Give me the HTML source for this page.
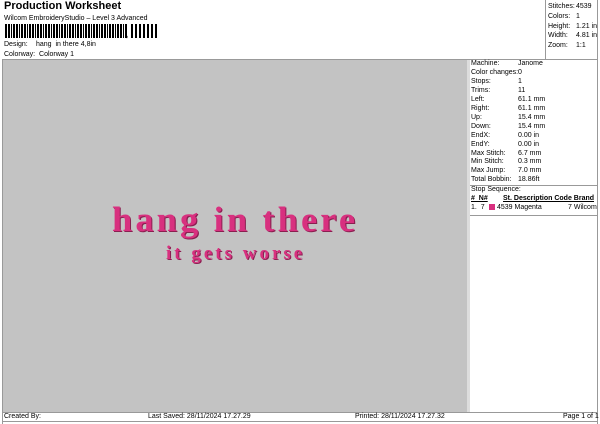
<!DOCTYPE html>
<html><head><meta charset="utf-8"><style>
*{margin:0;padding:0;box-sizing:border-box}
body{width:600px;height:424px;background:#fff;position:relative;overflow:hidden;font-family:"Liberation Sans",sans-serif;font-size:7px;color:#000}
.a{position:absolute;white-space:nowrap}
.bc{position:absolute;left:5px;top:24px;height:14px;width:123px;background:repeating-linear-gradient(90deg,#000 0 2px,#fff 2px 3px,#000 3px 5px,#fff 5px 6px,#000 6px 7px,#fff 7px 8px)}
.t{font-family:"Liberation Serif",serif;font-weight:bold;color:#d8307f;text-shadow:1px 1px 0 #8a1f50;letter-spacing:3px}
</style></head><body>
<div class="a" style="left:4px;top:0px;font-size:11px;font-weight:bold">Production Worksheet</div>
<div class="a" style="left:4px;top:15px">Wilcom EmbroideryStudio – Level 3 Advanced</div>
<div class="bc"></div>
<div class="a" style="left:126px;top:32px;font-weight:bold">,</div>
<div style="position:absolute;left:131px;top:24px;height:14px;width:27px;background:repeating-linear-gradient(90deg,#000 0 2px,#fff 2px 4px)"></div>
<div class="a" style="left:4px;top:41px">Design:</div><div class="a" style="left:36px;top:41px">hang&nbsp; in there 4,8in</div>
<div class="a" style="left:4px;top:51px">Colorway:&nbsp; Colorway 1</div>
<div style="position:absolute;left:545px;top:0;width:1px;height:60px;background:#999"></div>
<div class="a" style="left:548px;top:2px;line-height:9.8px">Stitches:<br>Colors:<br>Height:<br>Width:<br>Zoom:</div>
<div class="a" style="left:576px;top:2px;line-height:9.8px">4539<br>1<br>1.21 in<br>4.81 in<br>1:1</div>
<div style="position:absolute;left:2px;top:59px;width:596px;height:1px;background:#999"></div>
<div style="position:absolute;left:3px;top:60px;width:464px;height:352px;background:#c3c3c3"></div>
<div style="position:absolute;left:467px;top:60px;width:3px;height:352px;background:#ddd"></div>
<div style="position:absolute;left:597px;top:0;width:1px;height:424px;background:#999"></div>
<div style="position:absolute;left:2px;top:60px;width:1px;height:364px;background:#999"></div>
<div class="a" style="left:471px;top:60px;line-height:8.95px">Machine:<br>Color changes:<br>Stops:<br>Trims:<br>Left:<br>Right:<br>Up:<br>Down:<br>EndX:<br>EndY:<br>Max Stitch:<br>Min Stitch:<br>Max Jump:<br>Total Bobbin:</div>
<div class="a" style="left:518px;top:60px;line-height:8.95px">Janome<br>0<br>1<br>11<br>61.1 mm<br>61.1 mm<br>15.4 mm<br>15.4 mm<br>0.00 in<br>0.00 in<br>6.7 mm<br>0.3 mm<br>7.0 mm<br>18.86ft</div>
<div style="position:absolute;left:470px;top:185px;width:127px;height:1px;background:#999"></div>
<div class="a" style="left:471px;top:186px">Stop Sequence:</div>
<div class="a" style="left:471px;top:195px;font-weight:bold;text-decoration:underline">#&nbsp; N#</div>
<div class="a" style="left:503px;top:195px;font-weight:bold;text-decoration:underline">St. Description Code Brand</div>
<div class="a" style="left:471px;top:204px">1.&nbsp; 7</div>
<div style="position:absolute;left:489px;top:204px;width:6px;height:6px;background:#d8307f"></div>
<div class="a" style="left:497px;top:204px">4539 Magenta</div>
<div class="a" style="left:568px;top:204px">7 Wilcom</div>
<div style="position:absolute;left:470px;top:215px;width:127px;height:1px;background:#999"></div>
<div class="a t" style="left:112px;top:200px;font-size:35px;line-height:40px;transform:scaleX(1.04);transform-origin:left">hang in there</div>
<div class="a t" style="left:166px;top:243px;font-size:19px;line-height:22px">it gets worse</div>
<div style="position:absolute;left:2px;top:412px;width:596px;height:1px;background:#999"></div>
<div style="position:absolute;left:2px;top:421px;width:596px;height:1px;background:#999"></div>
<div class="a" style="left:4px;top:413px">Created By:</div>
<div class="a" style="left:148px;top:413px">Last Saved: 28/11/2024 17.27.29</div>
<div class="a" style="left:355px;top:413px">Printed: 28/11/2024 17.27.32</div>
<div class="a" style="left:563px;top:413px">Page 1 of 1</div>
</body></html>
